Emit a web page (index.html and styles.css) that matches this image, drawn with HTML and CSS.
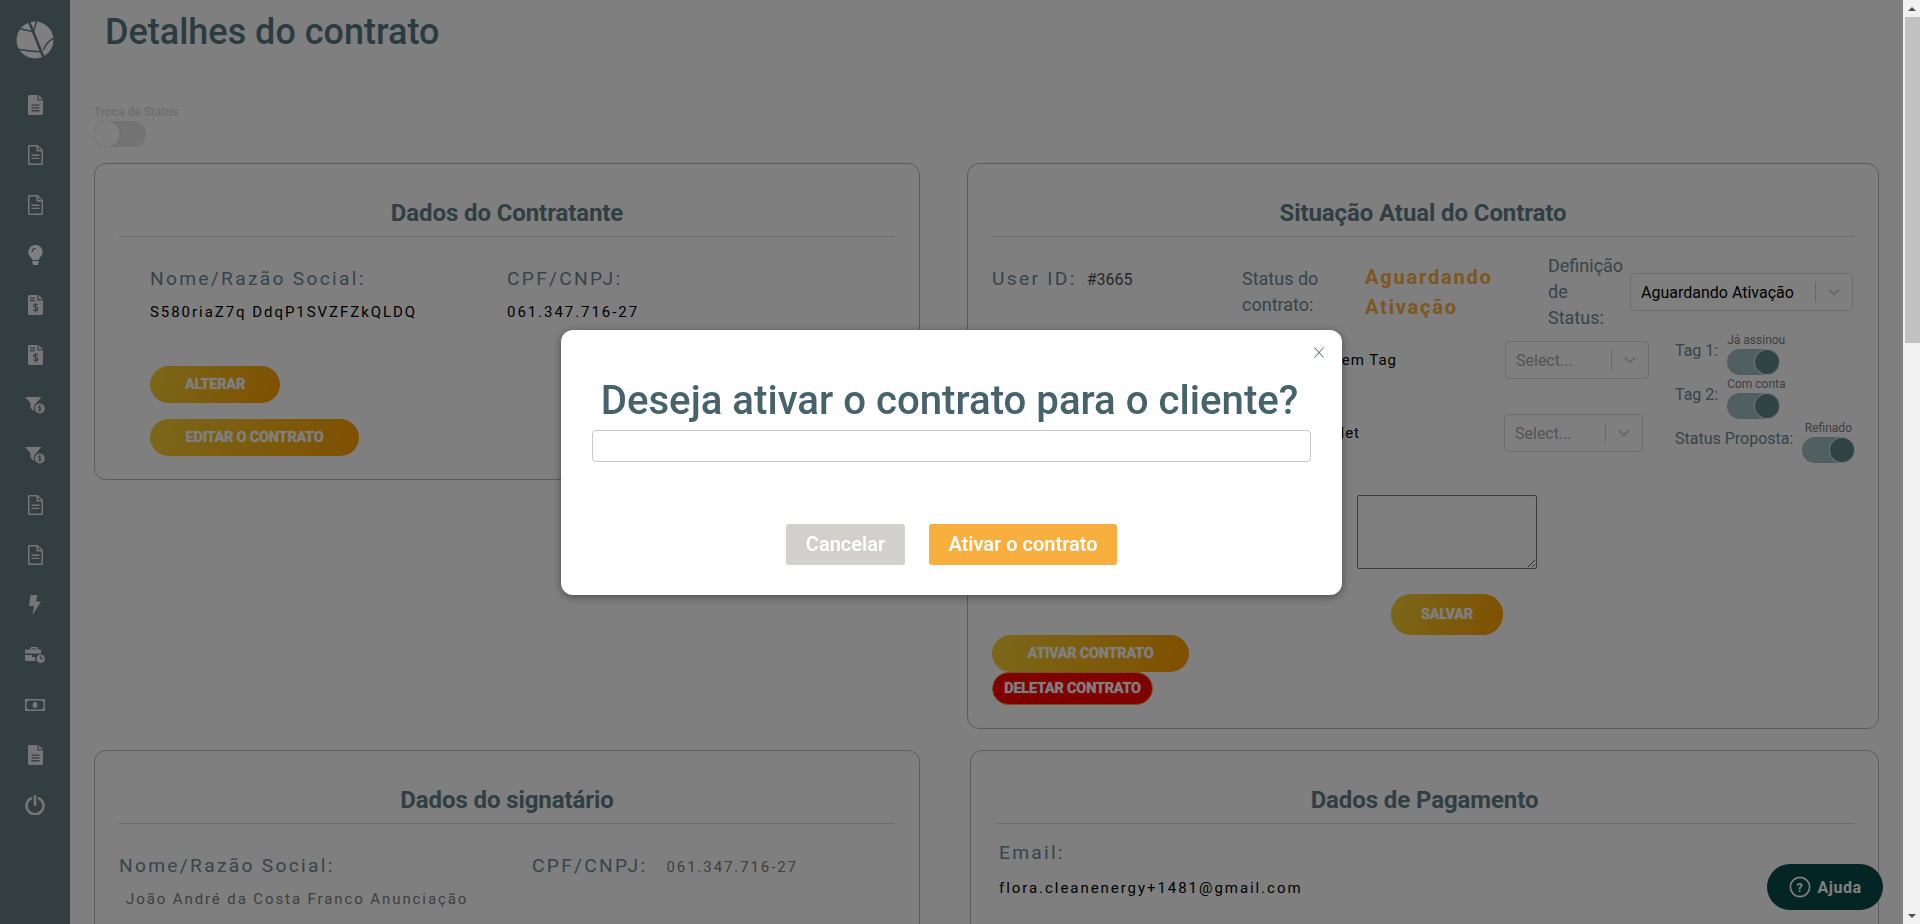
FILE: index.html
```html
<!DOCTYPE html>
<html lang="pt-BR">

<head>
    <meta charset="UTF-8">
    <meta name="viewport" content="width=device-width, initial-scale=1.0">
    <title>Detalhes do contrato</title>
    <link rel="stylesheet" href="styles.css">
</head>

<body>
    <!-- icon sprite -->
    <svg class="sprite" xmlns="http://www.w3.org/2000/svg">
        <symbol id="i-file" viewBox="0 0 15 20">
            <path fill-rule="evenodd" d="M1 0h8.500v5.500H15V19a1 1 0 0 1-1 1H1a1 1 0 0 1-1-1V1a1 1 0 0 1 1-1zM3.500 9.500v1.300h8V9.500zM3.500 12.300v1.300h8v-1.300zM3.500 15.100v1.300h8v-1.300z" />
            <path d="M10.700 0 15 4.300H10.700z" />
        </symbol>
        <symbol id="i-file-o" viewBox="0 0 15 20">
            <path fill-rule="evenodd" d="M1.500 0h8.300L15 5.200V18.500a1.500 1.500 0 0 1-1.500 1.500h-12A1.500 1.500 0 0 1 0 18.500v-17A1.500 1.500 0 0 1 1.500 0zM1.500 1.500v17h12V6.500H8.500v-5zM10 1.900v3.100h3.100z" />
            <path d="M3.500 9.500h8v1.400h-8zM3.500 12.700h8v1.400h-8z" />
        </symbol>
        <symbol id="i-bulb" viewBox="0 0 14 20">
            <path fill-rule="evenodd" d="M7 0a7 7 0 0 1 5.300 11.600c-.9 1-1.700 2.300-2 3.400H3.700c-.3-1.100-1.100-2.400-2-3.400A7 7 0 0 1 7 0zM7 3a4 4 0 0 0-4 4h1.200A2.800 2.800 0 0 1 7 4.200z" />
            <path d="M3.800 16h6.400v1.600L9 20H5l-1.200-2.400z" />
        </symbol>
        <symbol id="i-invoice" viewBox="0 0 15 20">
            <path fill-rule="evenodd" d="M1 0h8.500v5.500H15V19a1 1 0 0 1-1 1H1a1 1 0 0 1-1-1V1a1 1 0 0 1 1-1zM2 2.500v1.200h5V2.500zM2 5v1.200h5V5z" />
            <path d="M10.700 0 15 4.300H10.700z" />
            <path fill="none" stroke="#667c80" stroke-width="1.100" d="M9.700 10.300c-.4-.7-1.200-1-2.100-1-1.200 0-2 .6-2 1.500 0 2 4.300 1 4.300 3.100 0 1-.9 1.600-2.200 1.600-1 0-1.900-.4-2.300-1.200M7.600 8v9.200" />
        </symbol>
        <symbol id="i-funnel" viewBox="0 0 20 17">
            <path d="M0 0h16.500l-5 5.700a6.500 6.500 0 0 0-2.600 5.300V14L5.500 11V6z" />
            <circle cx="14.800" cy="11.500" r="5" />
            <path fill="none" stroke="#667c80" stroke-width="1" d="M16.300 9.800c-.4-.5-.9-.7-1.500-.7-.9 0-1.500.4-1.500 1.100 0 1.400 3.100.8 3.100 2.300 0 .7-.7 1.200-1.600 1.200-.7 0-1.300-.3-1.600-.9M14.800 8v7" />
        </symbol>
        <symbol id="i-bolt" viewBox="0 0 12 20">
            <path d="M1.500 0h7L7 6.500h5L3.500 20l1.500-9H0z" />
        </symbol>
        <symbol id="i-case" viewBox="0 0 20 16">
            <path fill-rule="evenodd" d="M5.500 2.500V1a1 1 0 0 1 1-1h5a1 1 0 0 1 1 1v1.500H15a1 1 0 0 1 1 1V6.500H0v-3a1 1 0 0 1 1-1zM7 1.500v1h4v-1z" />
            <path d="M0 8h7v2h3.200a6 6 0 0 0 .3 4H1a1 1 0 0 1-1-1z" />
            <circle cx="15.700" cy="11.700" r="4.300" />
            <path fill="none" stroke="#667c80" stroke-width="1" d="M15.700 9.200v2.800h2.300" />
        </symbol>
        <symbol id="i-money" viewBox="0 0 20 12">
            <path fill-rule="evenodd" d="M0 0h20v12H0zM3 1.500A1.500 1.500 0 0 1 1.500 3v6A1.500 1.500 0 0 1 3 10.500h14A1.500 1.500 0 0 1 18.500 9V3A1.500 1.500 0 0 1 17 1.500z" />
            <ellipse cx="10" cy="6" rx="2.400" ry="3" />
        </symbol>
        <symbol id="i-power" viewBox="0 0 20 20">
            <path fill="none" stroke-width="2.600" stroke-linecap="round" d="M6 3.300a8.500 8.500 0 1 0 8 0" stroke="currentColor" />
            <path fill="none" stroke-width="2.600" stroke-linecap="round" d="M10 1.300v8.500" stroke="currentColor" />
        </symbol>
    </svg>

    <div class="app">
        <nav class="sidebar">
            <div class="logo">
                <svg viewBox="0 0 38 38" width="38" height="38">
                    <circle cx="19" cy="19" r="18.500" fill="#ffffff" />
                    <path d="M13 .5 27.300 36" fill="none" stroke="#667c80" stroke-width="2.500" />
                    <path d="M20.700 .5 17.300 10.700M1.800 7.300 17.300 10.700M1.500 28.300c8 1.400 15 2 22.500 2.400M27.300 29c2-5 5-9 10-11.700" fill="none" stroke="#667c80" stroke-width="1.500" />
                </svg>
            </div>
            <a class="nav-item"><svg class="w15"><use href="#i-file" /></svg></a>
            <a class="nav-item"><svg class="w15"><use href="#i-file-o" /></svg></a>
            <a class="nav-item"><svg class="w15"><use href="#i-file-o" /></svg></a>
            <a class="nav-item"><svg class="w15 bright"><use href="#i-bulb" /></svg></a>
            <a class="nav-item"><svg class="w15"><use href="#i-invoice" /></svg></a>
            <a class="nav-item"><svg class="w15"><use href="#i-invoice" /></svg></a>
            <a class="nav-item"><svg class="w20 funnel"><use href="#i-funnel" /></svg></a>
            <a class="nav-item"><svg class="w20 funnel"><use href="#i-funnel" /></svg></a>
            <a class="nav-item"><svg class="w15"><use href="#i-file-o" /></svg></a>
            <a class="nav-item"><svg class="w15"><use href="#i-file-o" /></svg></a>
            <a class="nav-item"><svg class="bolt"><use href="#i-bolt" /></svg></a>
            <a class="nav-item"><svg class="w20 case"><use href="#i-case" /></svg></a>
            <a class="nav-item"><svg class="w20 money"><use href="#i-money" /></svg></a>
            <a class="nav-item"><svg class="w15"><use href="#i-file" /></svg></a>
            <a class="nav-item"><svg class="w20 power"><use href="#i-power" /></svg></a>
        </nav>

        <main class="content">
            <h1 class="page-title">Detalhes do contrato</h1>

            <div class="status-switch">
                <span class="status-switch-label">Troca de Status</span>
                <span class="toggle toggle-off"><span class="knob"></span></span>
            </div>

            <div class="row row-top">
                <section class="card card-contratante">
                    <h2 class="card-title">Dados do Contratante</h2>
                    <div class="fields">
                        <div class="field field-nome">
                            <div class="label">Nome/Razão Social:</div>
                            <div class="value">S580riaZ7q DdqP1SVZFZkQLDQ</div>
                        </div>
                        <div class="field">
                            <div class="label">CPF/CNPJ:</div>
                            <div class="value">061.347.716-27</div>
                        </div>
                    </div>
                    <div class="btn-stack">
                        <button class="btn btn-alterar">ALTERAR</button>
                        <button class="btn btn-editar">EDITAR O CONTRATO</button>
                    </div>
                </section>

                <section class="card card-situacao">
                    <h2 class="card-title">Situação Atual do Contrato</h2>

                    <div class="sit-top">
                        <div class="user-id"><span class="label">User ID:</span><span class="user-num">#3665</span></div>
                        <div class="status-text">Status do contrato:</div>
                        <div class="status-value">Aguardando Ativação</div>
                        <div class="status-def">Definição de Status:</div>
                        <div class="select select-def">
                            <span class="select-text">Aguardando Ativação</span>
                            <span class="select-sep"></span>
                            <svg class="chev" viewBox="0 0 12 8"><path d="M1 1.500l5 5 5-5" /></svg>
                        </div>
                    </div>

                    <div class="sit-mid">
                        <div class="sit-selects">
                            <div class="tag-row">
                                <span class="tag-label">Tag: Sem Tag</span>
                                <div class="select select-tag">
                                    <span class="select-text muted">Select...</span>
                                    <span class="select-sep"></span>
                                    <svg class="chev" viewBox="0 0 12 8"><path d="M1 1.500l5 5 5-5" /></svg>
                                </div>
                            </div>
                            <div class="tag-row tag-row-2">
                                <span class="tag-label">Wallet</span>
                                <div class="select select-wallet">
                                    <span class="select-text muted">Select...</span>
                                    <span class="select-sep"></span>
                                    <svg class="chev" viewBox="0 0 12 8"><path d="M1 1.500l5 5 5-5" /></svg>
                                </div>
                            </div>
                            <textarea class="obs"></textarea>
                            <button class="btn btn-salvar">SALVAR</button>
                        </div>

                        <div class="sit-toggles">
                            <div class="tag-toggle">
                                <span class="tag-name">Tag 1:</span>
                                <div class="toggle-box">
                                    <span class="toggle-cap">Já assinou</span>
                                    <span class="toggle toggle-on"><span class="knob"></span></span>
                                </div>
                            </div>
                            <div class="tag-toggle">
                                <span class="tag-name">Tag 2:</span>
                                <div class="toggle-box">
                                    <span class="toggle-cap">Com conta</span>
                                    <span class="toggle toggle-on"><span class="knob"></span></span>
                                </div>
                            </div>
                            <div class="tag-toggle">
                                <span class="tag-name">Status Proposta:</span>
                                <div class="toggle-box toggle-box-center">
                                    <span class="toggle-cap">Refinado</span>
                                    <span class="toggle toggle-on"><span class="knob"></span></span>
                                </div>
                            </div>
                        </div>
                    </div>

                    <div class="sit-actions">
                        <button class="btn btn-ativar">ATIVAR CONTRATO</button>
                        <button class="btn btn-deletar">DELETAR CONTRATO</button>
                    </div>
                </section>
            </div>

            <div class="row row-bottom">
                <section class="card card-signatario">
                    <h2 class="card-title">Dados do signatário</h2>
                    <div class="sign-line">
                        <span class="label sign-nome">Nome/Razão Social:</span>
                        <span class="label">CPF/CNPJ:</span>
                        <span class="sign-cpf">061.347.716-27</span>
                    </div>
                    <div class="sign-name">João André da Costa Franco Anunciação</div>
                </section>

                <section class="card card-pagamento">
                    <h2 class="card-title">Dados de Pagamento</h2>
                    <div class="label pay-label">Email:</div>
                    <div class="value pay-value">flora.cleanenergy+1481@gmail.com</div>
                </section>
            </div>
        </main>

        <div class="scrollbar">
            <span class="arrow arrow-up"></span>
            <div class="scroll-track"><div class="scroll-thumb"></div></div>
            <span class="arrow arrow-down"></span>
        </div>
    </div>

    <a class="help-btn">
        <svg viewBox="0 0 24 24" width="22" height="22"><circle cx="12" cy="12" r="10.500" fill="none" stroke="currentColor" stroke-width="1.800" /><text x="12" y="17" text-anchor="middle" font-family="Roboto" font-size="14" font-weight="700" fill="currentColor">?</text></svg>
        Ajuda
    </a>

    <div class="overlay">
        <div class="modal">
            <svg class="modal-close" viewBox="0 0 10 11"><path d="M.5 .5l9 10M9.500 .5l-9 10" /></svg>
            <h2 class="modal-title">Deseja ativar o contrato para o cliente?</h2>
            <input class="modal-input" type="text">
            <div class="modal-actions">
                <button class="modal-btn modal-cancel">Cancelar</button>
                <button class="modal-btn modal-confirm">Ativar o contrato</button>
            </div>
        </div>
    </div>
</body>

</html>
```

FILE: styles.css
```css
body,
html {
    margin: 0;
    padding: 0;
    height: 100%;
    font-family: Roboto, 'Liberation Sans', sans-serif;
    overflow: hidden;
    background: #ffffff;
}

.sprite {
    display: none;
}

.app {
    display: flex;
    height: 924px;
}

/* sidebar */

.sidebar {
    width: 70px;
    flex-shrink: 0;
    background: #667c80;
    display: flex;
    flex-direction: column;
    align-items: center;
}

.logo {
    height: 80px;
    display: flex;
    align-items: center;
    justify-content: center;
}

.nav-item {
    height: 50px;
    width: 100%;
    display: flex;
    align-items: center;
    justify-content: center;
    color: #ececec;
}

.nav-item svg {
    fill: currentColor;
    height: 20px;
}

.w15 {
    width: 15px;
}

.w20 {
    width: 20px;
}

.bolt {
    width: 12px;
}

.nav-item .funnel {
    height: 17px;
}

.nav-item .case {
    height: 16px;
}

.nav-item .money {
    height: 12px;
}

.nav-item .bright {
    fill: #ffffff;
}

/* main */

.content {
    flex: 1;
    min-width: 0;
    padding: 0 24px;
    overflow: hidden;
}

.page-title {
    margin: 11px 0 0 11px;
    font-size: 36px;
    line-height: 42px;
    font-weight: 500;
    color: #567883;
}

.status-switch {
    margin-top: 52px;
    height: 58px;
    display: flex;
    flex-direction: column;
    align-items: flex-start;
}

.status-switch-label {
    font-size: 12px;
    line-height: 14px;
    color: #dcdcdc;
    font-weight: 500;
}

.toggle {
    display: block;
    width: 52px;
    height: 26px;
    border-radius: 13px;
    position: relative;
}

.knob {
    position: absolute;
    top: 1px;
    width: 24px;
    height: 24px;
    border-radius: 50%;
}

.toggle-off {
    background: #e6e6e6;
    margin-top: 2px;
}

.toggle-off .knob {
    left: 0;
    top: 0;
    width: 26px;
    height: 26px;
    background: #ffffff;
    box-shadow: 0 0 1px rgba(0, 0, 0, 0.3);
}

.toggle-on {
    background: #a0bebe;
}

.toggle-on .knob {
    right: 0;
    background: #60888c;
    box-shadow: 0 0 0 1px #dfe8e8;
}

.row {
    display: flex;
}

.row-top {
    align-items: flex-start;
    gap: 47px;
}

.row-bottom {
    margin-top: 21px;
    gap: 50px;
}

.card {
    border: 1px solid #b8b8b8;
    border-radius: 12px;
    box-sizing: border-box;
    background: #ffffff;
}

.card-title {
    margin: 0 24px;
    height: 42px;
    padding-top: 30px;
    line-height: 38px;
    box-sizing: content-box;
    border-bottom: 1px solid #dcdcdc;
    text-align: center;
    font-size: 24px;
    font-weight: 700;
    letter-spacing: -0.100px;
    color: #5f7f88;
}

.label {
    font-size: 19.200px;
    line-height: 22px;
    letter-spacing: 2.300px;
    color: #6d8a94;
}

.value {
    font-size: 15px;
    line-height: 20px;
    letter-spacing: 1.950px;
    color: #000000;
}

.btn {
    display: block;
    border: none;
    border-radius: 20px;
    height: 37px;
    padding: 0;
    color: #ffffff;
    font-family: inherit;
    font-size: 14.400px;
    font-weight: 700;
    letter-spacing: -0.150px;
    text-shadow: 0 0 1px #ffffff;
    background: linear-gradient(110deg, #f5cf35 0%, #ffa000 100%);
}

/* contratante */

.card-contratante {
    width: 826px;
    height: 317px;
}

.fields {
    display: flex;
    margin: 31px 0 0 55px;
}

.field-nome {
    width: 357px;
}

.field .value {
    margin-top: 12px;
}

.btn-stack {
    margin: 44px 0 0 55px;
    display: flex;
    flex-direction: column;
    gap: 16px;
    align-items: flex-start;
}

.btn-alterar {
    width: 130px;
}

.btn-editar {
    width: 209px;
}

/* situacao */

.card-situacao {
    width: 912px;
    height: 566px;
}

.sit-top {
    display: flex;
    padding: 0 24px;
    margin-top: 16px;
    height: 88px;
}

.user-id {
    width: 250px;
    padding-top: 15px;
}

.user-num {
    margin-left: 10px;
    font-size: 16px;
    color: #4d4d4d;
}

.status-text {
    width: 100px;
    margin: 13px 23px 0 0;
    font-size: 18px;
    line-height: 26px;
    color: #6d8a94;
}

.status-value {
    width: 140px;
    margin: 9px 43px 0 0;
    font-size: 20px;
    line-height: 30px;
    letter-spacing: 1.800px;
    font-weight: 700;
    color: #f9ae40;
}

.status-def {
    width: 76px;
    margin-right: 6px;
    font-size: 18px;
    line-height: 26px;
    color: #6d8a94;
}

.select {
    box-sizing: border-box;
    height: 38px;
    display: flex;
    align-items: center;
    border: 1px solid #d8d8d8;
    border-radius: 4px;
    background: #ffffff;
    font-size: 16px;
    color: #000000;
}

.select-text {
    flex: 1;
    padding-left: 10px;
    white-space: nowrap;
}

.select-text.muted {
    color: #a8a8a8;
}

.select-sep {
    width: 1px;
    height: 20px;
    background: #d0d0d0;
}

.chev {
    width: 12px;
    height: 8px;
    margin: 0 12px;
    fill: none;
    stroke: #d0d0d0;
    stroke-width: 1.800;
}

.select-def {
    width: 223px;
    margin-top: 20px;
}

.sit-mid {
    display: flex;
}

.sit-selects {
    width: 707px;
    flex-shrink: 0;
}

.tag-row {
    display: flex;
    align-items: center;
    height: 38px;
}

.tag-row-2 {
    margin-top: 35px;
}

.tag-label {
    width: 537px;
    padding-right: 108px;
    box-sizing: border-box;
    text-align: right;
    font-size: 15px;
    letter-spacing: 1px;
    color: #000000;
}

.tag-row-2 .tag-label {
    width: 536px;
    padding-right: 144px;
}

.select-tag {
    width: 144px;
}

.select-wallet {
    width: 139px;
}

.obs {
    display: block;
    box-sizing: border-box;
    width: 180px;
    height: 74px;
    margin: 43px 0 0 389px;
    border: 1px solid #767676;
    border-radius: 2px;
    background: #ffffff;
}

.btn-salvar {
    width: 112px;
    height: 41px;
    margin: 25px 0 0 423px;
}

.sit-toggles {
    margin-top: -8px;
}

.tag-toggle {
    display: flex;
    align-items: flex-start;
    height: 44px;
    font-size: 16px;
    color: #6d8a94;
}

.tag-name {
    margin-top: 8px;
    margin-right: 9px;
}

.toggle-cap {
    display: block;
    font-size: 12px;
    line-height: 14px;
    margin-bottom: 2px;
    white-space: nowrap;
    color: #808080;
}

.toggle-box {
    width: 52px;
    display: flex;
    flex-direction: column;
    align-items: flex-start;
}

.toggle-box-center {
    align-items: center;
}

.sit-actions {
    margin-left: 24px;
}

.btn-ativar {
    width: 197px;
}

.btn-deletar {
    width: 161px;
    height: 33px;
    background: #ff0000;
    border: 1px solid #f0a030;
}

/* bottom cards */

.card-signatario {
    width: 826px;
    height: 240px;
}

.card-pagamento {
    width: 909px;
    height: 240px;
}

.sign-line {
    display: flex;
    align-items: baseline;
    margin: 31px 0 0 24px;
}

.sign-nome {
    width: 413px;
}

.sign-cpf {
    margin-left: 19px;
    font-size: 15px;
    letter-spacing: 1.900px;
    color: #808080;
}

.sign-name {
    margin: 13px 0 0 31px;
    font-size: 15px;
    letter-spacing: 1.900px;
    color: #808080;
}

.pay-label {
    margin: 18px 0 0 28px;
}

.pay-value {
    margin: 14px 0 0 28px;
}

/* scrollbar */

.scrollbar {
    width: 17px;
    flex-shrink: 0;
    background: #f1f1f1;
    display: flex;
    flex-direction: column;
}

.arrow {
    height: 17px;
    display: flex;
    align-items: center;
    justify-content: center;
}

.arrow::after {
    content: '';
    border-left: 4px solid transparent;
    border-right: 4px solid transparent;
}

.arrow-up::after {
    border-bottom: 4px solid #505050;
}

.arrow-down::after {
    border-top: 4px solid #505050;
}

.scroll-track {
    flex: 1;
}

.scroll-thumb {
    height: 326px;
    margin: 0 0 0 2px;
    background: #c1c1c1;
}

/* help widget */

.help-btn {
    position: fixed;
    left: 1767px;
    top: 864px;
    width: 116px;
    height: 46px;
    border-radius: 23px;
    background: #064a48;
    color: #ffffff;
    font-size: 16px;
    font-weight: 700;
    letter-spacing: 0.500px;
    display: flex;
    align-items: center;
    justify-content: center;
    gap: 7px;
}

/* modal */

.overlay {
    position: fixed;
    top: 0;
    left: 0;
    right: 17px;
    bottom: 0;
    background: rgba(0, 0, 0, 0.5);
    display: flex;
    align-items: center;
    justify-content: center;
}

.modal {
    position: relative;
    width: 781px;
    height: 265px;
    box-sizing: border-box;
    padding: 45px 31px 0;
    background: #ffffff;
    border-radius: 12px;
    box-shadow: 0 2px 10px rgba(0, 0, 0, 0.4);
}

.modal-close {
    position: absolute;
    top: 17px;
    right: 18px;
    width: 10px;
    height: 11px;
    fill: none;
    stroke: #46626a;
    stroke-width: 1;
}

.modal-title {
    margin: 0;
    padding-right: 4px;
    font-size: 40.200px;
    line-height: 52px;
    font-weight: 500;
    text-align: center;
    white-space: nowrap;
    color: #46626a;
}

.modal-input {
    display: block;
    box-sizing: border-box;
    width: 100%;
    height: 32px;
    margin-top: 3px;
    border: 1px solid #c8c8c8;
    border-radius: 4px;
}

.modal-actions {
    display: flex;
    justify-content: center;
    gap: 24px;
    margin-top: 62px;
}

.modal-btn {
    height: 41px;
    border: none;
    border-radius: 3px;
    color: #ffffff;
    font-family: inherit;
    font-size: 20px;
    font-weight: 600;
}

.modal-cancel {
    width: 119px;
    background: #d1d0cd;
}

.modal-confirm {
    width: 188px;
    background: #f9ae40;
}
```
